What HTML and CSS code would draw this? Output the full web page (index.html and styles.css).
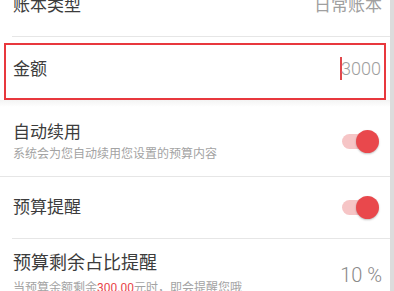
FILE: index.html
```html
<!DOCTYPE html>
<html lang="zh">

<head>
  <meta charset="UTF-8">
  <meta name="viewport" content="width=device-width, initial-scale=1.0">
  <title>预算设置</title>
  <link rel="stylesheet" href="styles.css">
</head>

<body>
  <div class="page">
    <div class="list">
      <div class="item first">
        <span class="title">账本类型</span>
        <span class="value">日常账本</span>
      </div>

      <div class="amountWrap">
        <div class="amount">
          <span class="title">金额</span>
          <span class="amountValue"><span class="cursor"></span>3000</span>
        </div>
      </div>

      <div class="item renew">
        <div class="texts">
          <span class="title">自动续用</span>
          <span class="desc">系统会为您自动续用您设置的预算内容</span>
        </div>
        <div class="switch"><span class="track"></span><span class="thumb"></span></div>
      </div>

      <div class="item remind">
        <span class="title">预算提醒</span>
        <div class="switch"><span class="track"></span><span class="thumb"></span></div>
      </div>

      <div class="item percent">
        <div class="texts">
          <span class="title big">预算剩余占比提醒</span>
          <span class="desc">当预算余额剩余<em>300.00</em>元时，即会提醒您哦</span>
        </div>
        <span class="percentValue">10 %</span>
      </div>
    </div>
    <div class="scrollbar"></div>
  </div>
</body>

</html>
```

FILE: styles.css
```css
html,
body {
  margin: 0;
  padding: 0;
  background-color: #fff;
  font-family: Roboto, "Noto Sans CJK SC", sans-serif;
  overflow: hidden;
}

.page {
  display: flex;
  width: 394px;
  height: 291px;
  overflow: hidden;
}

.list {
  width: 390px;
  margin-top: -26px;
}

.scrollbar {
  width: 4px;
  background-color: #dcdcdc;
}

.item {
  display: flex;
  align-items: center;
  justify-content: space-between;
  box-sizing: border-box;
  margin-left: 12px;
  padding-left: 1px;
  padding-right: 8px;
  border-bottom: 1px solid #e6e6e6;
}

.title {
  font-size: 17px;
  line-height: 22px;
  color: #3c3c3c;
}

.title.big {
  font-size: 18px;
  line-height: 24px;
}

.value {
  font-size: 17px;
  line-height: 22px;
  color: #a0a0a0;
}

.first {
  height: 63px;
}

/* 금액 입력 박스 */
.amountWrap {
  padding: 6px 4px 0 4px;
}

.amount {
  display: flex;
  align-items: center;
  justify-content: space-between;
  height: 57px;
  box-sizing: border-box;
  border: 2px solid #e8383d;
  padding: 0 3px 5px 7px;
}

.amountValue {
  font-size: 18px;
  line-height: 24px;
  color: #9e9e9e;
  font-weight: 300;
}

.cursor {
  display: inline-block;
  width: 2px;
  height: 23px;
  background-color: #e0474b;
  vertical-align: -5px;
  margin-right: -1px;
}

.renew {
  height: 77px;
  padding-top: 21px;
  padding-bottom: 14px;
  align-items: center;
  background: linear-gradient(#f3f3f3, #fff 7px);
  margin-left: 0;
  padding-left: 13px;
}

.renew::before {
  content: none;
}

.texts {
  display: flex;
  flex-direction: column;
}

.desc {
  font-size: 12px;
  line-height: 17px;
  color: #a3a3a3;
  margin-top: 3px;
}

.desc em {
  font-style: normal;
  color: #e8474b;
}

.remind {
  height: 62px;
  padding-bottom: 1px;
}

.percent {
  border-bottom: none;
  padding-top: 12px;
  align-items: center;
}

.percent .desc {
  margin-top: 5px;
}

.percentValue {
  font-size: 20px;
  line-height: 24px;
  color: #8a8a8a;
  font-weight: 300;
  margin-top: 2px;
}

/* 스위치 */
.switch {
  position: relative;
  width: 37px;
  height: 23px;
  margin-right: 3px;
}

.track {
  position: absolute;
  left: 0;
  top: 4px;
  width: 30px;
  height: 15px;
  border-radius: 8px;
  background-color: #f6c5c6;
}

.thumb {
  position: absolute;
  right: 0;
  top: 0;
  width: 23px;
  height: 23px;
  border-radius: 50%;
  background-color: #e9484c;
  box-shadow: 0 1px 2px rgba(0, 0, 0, 0.25);
}
```
